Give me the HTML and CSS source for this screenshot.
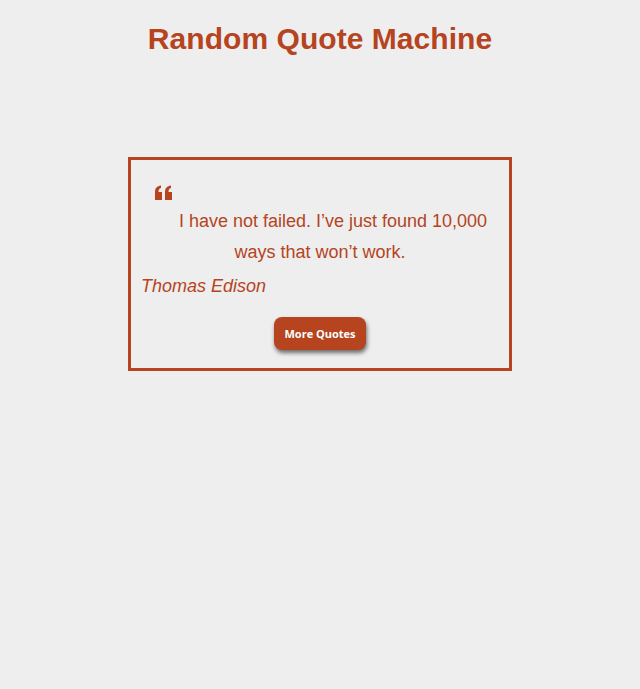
FILE: index.html
```html
<!DOCTYPE html>
<html>
<head>
<meta charset="utf-8">
<link rel="stylesheet" href="styles.css">
</head>
<body>
<h1 class="title">Random Quote Machine</h1>
<div class="box">
  <div class="icon"><svg width="20" height="15" viewBox="0 0 20 15"><path fill="#b5441f" d="M1 15V7C1 3 3 1 7 0.5V3C5 3.5 4.5 5 4.5 7H8V15Z M11 15V7C11 3 13 1 17 0.5V3C15 3.5 14.5 5 14.5 7H18V15Z"/></svg></div>
  <p class="quote">I have not failed. I’ve just found 10,000 ways that won’t work.</p>
  <p class="author">Thomas Edison</p>
  <div class="actions"><button class="btn">More Quotes</button></div>
</div>
</body>
</html>
```
FILE: styles.css
```css
html, body { margin: 0; padding: 0; }
body {
  background: #eeeeee;
  font-family: "Liberation Sans", Arial, sans-serif;
  color: #b5441f;
}
.title {
  margin: 0;
  padding-top: 21px;
  text-align: center;
  font-size: 30px;
  font-weight: bold;
  line-height: 36px;
  letter-spacing: 0.05px;
}
.box {
  width: 378px;
  margin: 100px auto 0;
  border: 3px solid #b5441f;
  padding: 25px 0 18px;
}
.icon {
  padding-left: 23px;
  height: 15px;
}
.icon svg { display: block; }
.quote {
  margin: 6px 0 0;
  font-size: 18px;
  line-height: 31px;
  text-align: center;
  text-indent: 26px;
  padding: 0 4px;
}
.author {
  margin: 0;
  padding: 2px 0 0 10px;
  font-style: italic;
  font-size: 18px;
  line-height: 33px;
}
.actions {
  display: flex;
  justify-content: center;
  margin-top: 14px;
}
.btn {
  width: 92px;
  height: 33px;
  border: none;
  border-radius: 8px;
  background: #b5441f;
  color: #fff;
  font-family: "Open Sans", sans-serif;
  font-weight: bold;
  font-size: 11px;
  box-shadow: 1px 3px 4px rgba(0,0,0,0.55);
  padding: 0;
}
```
